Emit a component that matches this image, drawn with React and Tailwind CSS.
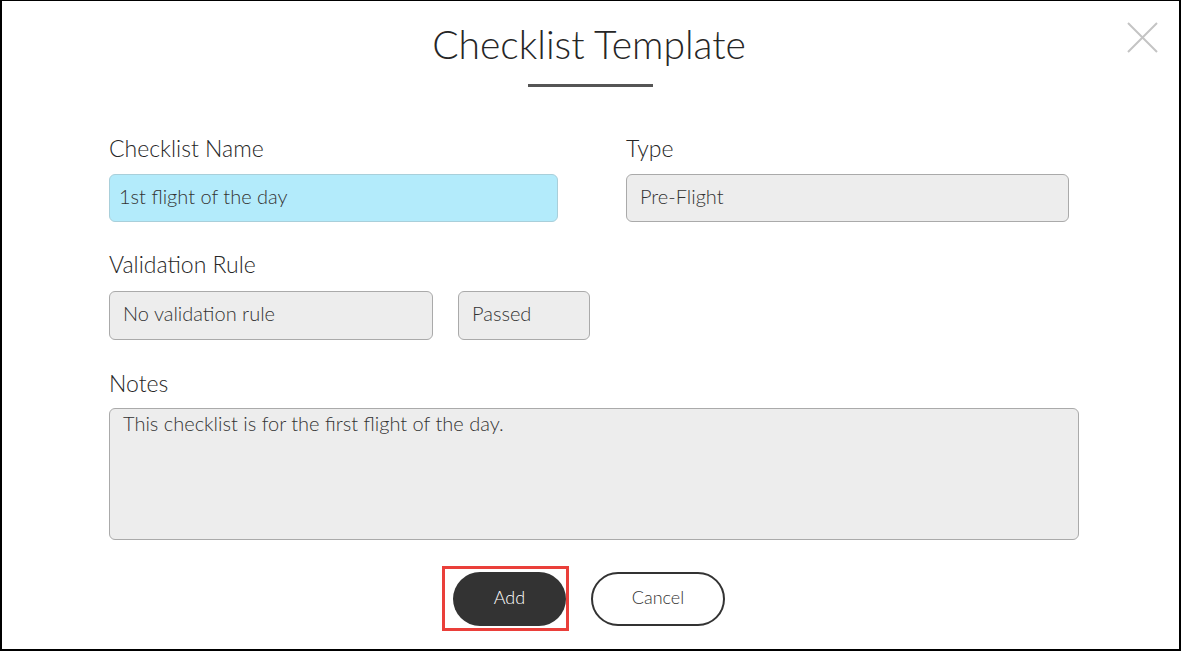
import React from 'react';

const FONT = { fontFamily: 'Lato, "Noto Sans", sans-serif' };

function Label({ children }) {
  return <div className="text-[23px] leading-[28px] text-[#262626]">{children}</div>;
}

function Field({ children, className = '' }) {
  return (
    <div
      className={`flex h-[48px] items-center rounded-[6px] border border-[#aaa] bg-[#ededed] px-[13px] pb-[5px] text-[20px] leading-[24px] text-[#333] ${className}`}
    >
      {children}
    </div>
  );
}

export default function App() {
  return (
    <div style={FONT} className="relative h-[651px] w-[1181px] border-t border-r-2 border-b-2 border-l-2 border-black bg-white font-light">
      {/* close */}
      <button className="absolute left-[1125px] top-[21px] h-[31px] w-[31px]">
        <svg width="31" height="31" viewBox="0 0 31 31">
          <path d="M1 1 L30 30 M30 1 L1 30" stroke="#c4c4c4" strokeWidth="2" fill="none" />
        </svg>
      </button>

      {/* header */}
      <div className="pt-[20px] text-center">
        <h1 className="ml-[-3px] text-[39px] font-light leading-[47px] text-[#262626]">Checklist Template</h1>
        <div className="mx-auto mt-[16px] h-[3px] w-[125px] bg-[#555]" />
      </div>

      <div className="mt-[47px] pl-[107px]">
        {/* name + type */}
        <div className="flex gap-[68px]">
          <div className="w-[449px]">
            <Label>Checklist Name</Label>
            <div className="mt-[12px] flex h-[48px] items-center rounded-[6px] border border-[#a9cfda] bg-[#b3ebfb] px-[9px] pb-[5px] text-[20px] leading-[24px] text-[#333]">
              1st flight of the day
            </div>
          </div>
          <div className="w-[443px]">
            <Label>Type</Label>
            <Field className="mt-[12px]">Pre-Flight</Field>
          </div>
        </div>

        {/* validation */}
        <div className="mt-[28px]">
          <Label>Validation Rule</Label>
          <div className="mt-[13px] flex gap-[25px]">
            <Field className="h-[49px] w-[324px]">No validation rule</Field>
            <Field className="h-[49px] w-[132px]">Passed</Field>
          </div>
        </div>

        {/* notes */}
        <div className="mt-[29px]">
          <Label>Notes</Label>
          <div className="mt-[11px] h-[132px] w-[970px] rounded-[6px] border border-[#aaa] bg-[#ededed] px-[13px] pt-[2px] text-[20px] leading-[24px] text-[#333]">
            This checklist is for the first flight of the day.
          </div>
        </div>

        {/* actions */}
        <div className="mt-[26px] ml-[333px] flex items-center gap-[22px]">
          <div className="border-[3px] border-[#ea3f3a] pt-[3px] pr-[0px] pb-[2px] pl-[8px]">
            <button className="flex h-[54px] w-[113px] items-center justify-center rounded-full bg-[#333] pb-[3px] text-[18px] text-white">
              Add
            </button>
          </div>
          <button className="flex h-[54px] w-[134px] items-center justify-center rounded-full border-2 border-[#333] pb-[3px] text-[18px] text-[#333]">
            Cancel
          </button>
        </div>
      </div>
    </div>
  );
}
